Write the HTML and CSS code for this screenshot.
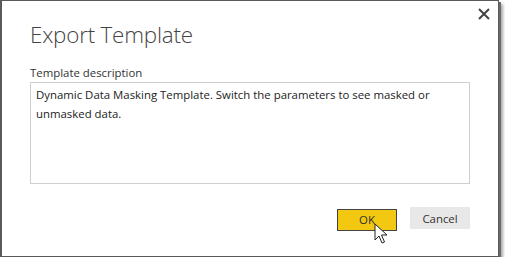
FILE: index.html
```html
<!DOCTYPE html>
<html>
<head>
<meta charset="utf-8">
<link rel="stylesheet" href="styles.css">
</head>
<body>
<div class="dialog">
  <button class="close" aria-label="Close">
    <svg width="12" height="12" viewBox="0 0 12 12"><path d="M1 1 L11 11 M11 1 L1 11" stroke="#444" stroke-width="2" fill="none"/></svg>
  </button>
  <h1 class="title">Export Template</h1>
  <label class="label">Template description</label>
  <div class="desc">Dynamic Data Masking Template. Switch the parameters to see masked or unmasked data.</div>
  <div class="actions">
    <div class="btn-wrap">
      <button class="btn ok">OK</button>
      <svg class="cursor" width="14" height="22" viewBox="0 0 14 22"><path d="M1 1 L1 17 L5 13 L8 20 L10.5 19 L7.5 12 L13 12 Z" fill="#fff" stroke="#222" stroke-width="1" stroke-linejoin="round"/></svg>
    </div>
    <button class="btn cancel">Cancel</button>
  </div>
</div>
</body>
</html>
```
FILE: styles.css
```css
html, body {
  margin: 0;
  padding: 0;
  background: #fff;
}
body {
  font-family: "Segoe UI", "Open Sans", "Noto Sans", sans-serif;
  color: #333;
}
.dialog {
  position: relative;
  box-sizing: border-box;
  width: 499px;
  height: 257px;
  border: 1px solid #5a5a5a;
  border-left-width: 2px;
  background: #fff;
  box-shadow: 2px 2px 0 #6a6a6a, 4px 4px 3px rgba(0,0,0,0.35);
  padding: 16px 28px 0 28px;
}
.close {
  position: absolute;
  top: 7px;
  right: 8px;
  border: 0;
  background: none;
  padding: 0;
  width: 12px;
  height: 12px;
}
.title {
  margin: 0;
  font-size: 22.4px;
  font-weight: 300;
  color: #444;
  line-height: 36px;
  letter-spacing: -0.2px;
}
.label {
  display: block;
  margin-top: 12px;
  font-size: 11.4px;
  line-height: 16px;
  color: #333;
}
.desc {
  box-sizing: border-box;
  height: 102px;
  width: 440px;
  border: 1px solid #cfcfcf;
  margin-top: 1px;
  padding: 2px 5px;
  font-size: 11.4px;
  line-height: 19px;
  color: #222;
}
.actions {
  display: flex;
  justify-content: flex-end;
  gap: 13px;
  width: 440px;
  margin-top: 23px;
}
.btn-wrap {
  position: relative;
}
.btn {
  box-sizing: border-box;
  width: 60px;
  height: 22px;
  font-family: inherit;
  font-size: 11.4px;
  color: #333;
  padding: 0;
}
.ok {
  background: #f2c811;
  border: 1px solid #444;
}
.cancel {
  background: #e8e8e8;
  border: 0;
}
.cursor {
  position: absolute;
  left: 37px;
  top: 16px;
}
```
